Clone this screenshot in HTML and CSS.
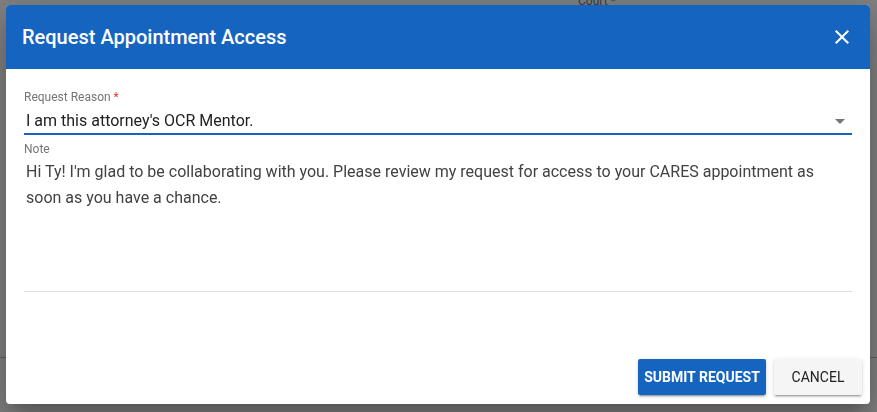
FILE: index.html
```html
<!DOCTYPE html>
<html lang="en">
<head>
<meta charset="utf-8">
<title>Request Appointment Access</title>
<link rel="stylesheet" href="styles.css">
</head>
<body>
<div class="page">
  <div class="bg-label">Court *</div>
  <div class="bg-rule"></div>
</div>
<div class="overlay">
  <div class="dialog" role="dialog">
    <header class="dialog-header">
      <h1 class="dialog-title">Request Appointment Access</h1>
      <button class="close-btn" aria-label="Close">
        <svg width="24" height="24" viewBox="0 0 24 24"><path d="M19 6.41 17.59 5 12 10.59 6.41 5 5 6.41 10.59 12 5 17.59 6.41 19 12 13.41 17.59 19 19 17.59 13.41 12z" fill="#fff"/></svg>
      </button>
    </header>
    <div class="dialog-content">
      <div class="field select-field">
        <label class="field-label">Request Reason <span class="req">*</span></label>
        <div class="select-box">
          <span class="select-value">I am this attorney's OCR Mentor.</span>
          <span class="select-arrow"></span>
        </div>
      </div>
      <div class="field note-field">
        <label class="field-label">Note</label>
        <div class="note-text">Hi Ty! I'm glad to be collaborating with you. Please review my request for access to your CARES appointment as soon as you have a chance.</div>
      </div>
    </div>
    <div class="dialog-actions">
      <button class="btn btn-primary">SUBMIT REQUEST</button>
      <button class="btn btn-default">CANCEL</button>
    </div>
  </div>
</div>
</body>
</html>
```

FILE: styles.css
```css
* { box-sizing: border-box; }
html, body {
  margin: 0;
  padding: 0;
  width: 877px;
  height: 412px;
  overflow: hidden;
  font-family: Roboto, "Liberation Sans", Arial, sans-serif;
  background: #fff;
}
.page {
  position: relative;
  width: 877px;
  height: 412px;
}
.bg-label {
  position: absolute;
  left: 578px;
  top: -6px;
  font-size: 12px;
  color: #757575;
}
.bg-rule {
  position: absolute;
  left: 0;
  right: 0;
  top: 357px;
  height: 1px;
  background: #bdbdbd;
}
.overlay {
  position: fixed;
  inset: 0;
  background: rgba(0, 0, 0, 0.5);
}
.dialog {
  position: absolute;
  left: 6px;
  top: 5px;
  width: 864px;
  height: 399px;
  background: #fff;
  border-radius: 4px;
  overflow: hidden;
  display: flex;
  flex-direction: column;
  box-shadow: 0 11px 15px -7px rgba(0,0,0,.2), 0 24px 38px 3px rgba(0,0,0,.14), 0 9px 46px 8px rgba(0,0,0,.12);
}
.dialog-header {
  height: 64px;
  flex: none;
  background: #1565c0;
  display: flex;
  align-items: center;
  justify-content: space-between;
  padding: 0 16px;
}
.dialog-title {
  margin: 0;
  font-size: 20px;
  font-weight: 500;
  color: #fff;
  letter-spacing: 0;
}
.close-btn {
  border: 0;
  background: none;
  padding: 0;
  width: 24px;
  height: 24px;
  display: flex;
  cursor: pointer;
}
.dialog-content {
  flex: 1;
  padding: 21px 18px 0;
}
.field-label {
  display: block;
  font-size: 12px;
  line-height: 14px;
  color: #757575;
}
.req { color: #e53935; }
.select-box {
  display: flex;
  align-items: center;
  justify-content: space-between;
  height: 31px;
  padding: 4px 2px 0 2px;
  border-bottom: 2px solid #1565c0;
}
.select-value {
  font-size: 16px;
  color: #212121;
}
.select-arrow {
  width: 0;
  height: 0;
  border-left: 5px solid transparent;
  border-right: 5px solid transparent;
  border-top: 5px solid #757575;
  margin-right: 5px;
  margin-top: 2px;
}
.note-field {
  margin-top: 7px;
  border-bottom: 1px solid #ddd;
  height: 150px;
}
.note-text {
  font-size: 16px;
  line-height: 26px;
  color: #424242;
  padding: 3px 2px 0 2px;
}
.dialog-actions {
  flex: none;
  display: flex;
  justify-content: flex-end;
  gap: 8px;
  padding: 0 8px 9px;
}
.btn {
  height: 36px;
  border: 0;
  border-radius: 2px;
  font-family: Roboto, "Liberation Sans", Arial, sans-serif;
  font-size: 14px;
  padding: 0 16px;
  cursor: pointer;
  box-shadow: 0 3px 1px -2px rgba(0,0,0,.2), 0 2px 2px 0 rgba(0,0,0,.14), 0 1px 5px 0 rgba(0,0,0,.12);
}
.btn-primary {
  background: #1565c0;
  color: #fff;
  font-weight: 700;
  padding: 0 6px;
  width: 128px;
}
.btn-default {
  background: #f5f5f5;
  color: #212121;
  font-weight: 400;
  width: 88px;
}
```
